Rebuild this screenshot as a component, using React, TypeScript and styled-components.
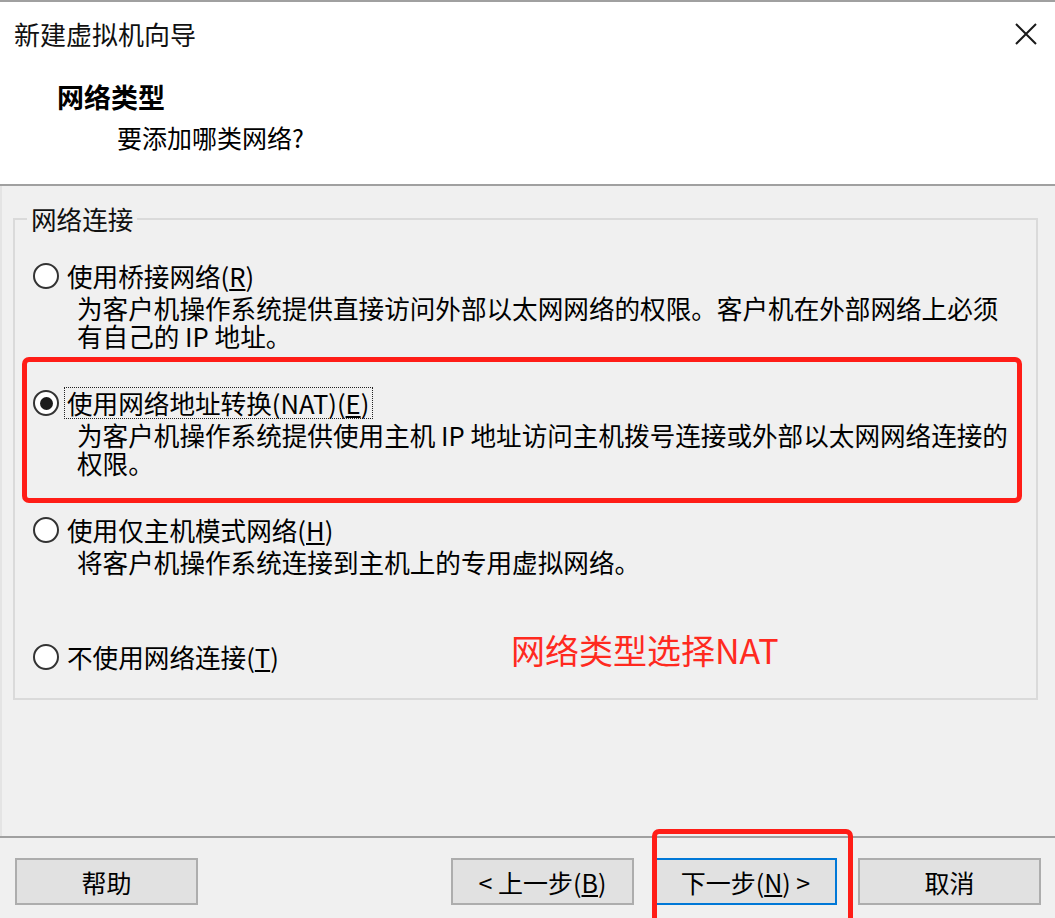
import React, { FC } from "react";
import styled, { createGlobalStyle } from "styled-components";

const FONT = `"Noto Sans CJK SC", "Liberation Sans", sans-serif`;

const GlobalStyle = createGlobalStyle`
  html, body {
    margin: 0;
    padding: 0;
    background: #f0f0f0;
  }
  body {
    font-family: ${FONT};
    color: #000;
  }
  * {
    box-sizing: border-box;
  }
`;

interface OptionProps {
  text: string;
  accel: string;
  desc?: string[];
  checked?: boolean;
  focused?: boolean;
  highlighted?: boolean;
  note?: string;
}

const NetOption: FC<OptionProps> = ({
  text,
  accel,
  desc = [],
  checked,
  focused,
  highlighted,
  note,
}) => (
  <Option $highlighted={highlighted}>
    <OptionRow>
      <Radio $checked={checked} />
      <Label $focused={focused}>
        {text}(<u>{accel}</u>)
      </Label>
    </OptionRow>
    {desc.length > 0 && (
      <Desc>
        {desc.map((line) => (
          <DescLine key={line}>{line}</DescLine>
        ))}
      </Desc>
    )}
    {note && <Annotation>{note}</Annotation>}
  </Option>
);

export default function App() {
  return (
    <>
      <GlobalStyle />
      <Dialog>
        <Header>
          <TitleBar>
            <WindowTitle>新建虚拟机向导</WindowTitle>
            <CloseButton aria-label="关闭">
              <svg width="22" height="22" viewBox="0 0 22 22">
                <path d="M1 1 L21 21 M21 1 L1 21" stroke="#1a1a1a" strokeWidth="2" />
              </svg>
            </CloseButton>
          </TitleBar>
          <Heading>
            <HeadingTitle>网络类型</HeadingTitle>
            <HeadingSub>要添加哪类网络?</HeadingSub>
          </Heading>
        </Header>

        <Body>
          <GroupBox>
            <Legend>网络连接</Legend>
            <Options>
              <NetOption
                text="使用桥接网络"
                accel="R"
                desc={[
                  "为客户机操作系统提供直接访问外部以太网网络的权限。客户机在外部网络上必须",
                  "有自己的 IP 地址。",
                ]}
              />
              <NetOption
                text="使用网络地址转换(NAT)"
                accel="E"
                checked
                focused
                highlighted
                desc={[
                  "为客户机操作系统提供使用主机 IP 地址访问主机拨号连接或外部以太网网络连接的",
                  "权限。",
                ]}
              />
              <NetOption
                text="使用仅主机模式网络"
                accel="H"
                desc={["将客户机操作系统连接到主机上的专用虚拟网络。"]}
              />
              <NetOption text="不使用网络连接" accel="T" note="网络类型选择NAT" />
            </Options>
          </GroupBox>
        </Body>

        <Footer>
          <Button>帮助</Button>
          <Spacer />
          <Button>
            &lt; 上一步(<u>B</u>)
          </Button>
          <Button $primary $gap={20}>
            下一步(<u>N</u>) &gt;
          </Button>
          <Button $gap={21}>取消</Button>
          <NextHighlight />
        </Footer>
      </Dialog>
    </>
  );
}

const Dialog = styled.div`
  width: 1055px;
  height: 918px;
  display: flex;
  flex-direction: column;
  overflow: hidden;
  border-top: 2px solid #a0a0a0;
  background: #f0f0f0;
`;

const Header = styled.header`
  height: 184px;
  flex-shrink: 0;
  background: #fff;
  border-bottom: 2px solid #a0a0a0;
`;

const TitleBar = styled.div`
  height: 64px;
  display: flex;
  align-items: center;
  justify-content: space-between;
  padding: 0 18px 0 14px;
`;

const WindowTitle = styled.h1`
  margin: 0;
  font-size: 26px;
  font-weight: 400;
  line-height: 1;
  color: #111;
`;

const CloseButton = styled.button`
  border: none;
  background: none;
  padding: 0;
  display: flex;
`;

const Heading = styled.div`
  padding: 15px 0 0 57px;
`;

const HeadingTitle = styled.h2`
  margin: 0;
  font-size: 27px;
  font-weight: 700;
  line-height: 32px;
`;

const HeadingSub = styled.p`
  margin: 8px 0 0 60px;
  font-size: 25px;
  line-height: 32px;
`;

const Body = styled.main`
  flex: 1;
  padding: 19px 17px 0 13px;
  border-left: 2px solid #e4e4e4;
`;

const GroupBox = styled.fieldset`
  margin: 0 0 0 -2px;
  padding: 25px 2px 0 0;
  height: 495px;
  min-width: 0;
  border: 2px solid #dadada;
`;

const Legend = styled.legend`
  margin-left: 12px;
  padding: 0 4px;
  font-size: 25.6px;
  line-height: 28px;
  color: #111;
`;

const Options = styled.div`
  display: flex;
  flex-direction: column;
  gap: 35px;
  padding-left: 18px;
`;

const Option = styled.div<{ $highlighted?: boolean }>`
  position: relative;

  &::before {
    content: "";
    display: ${({ $highlighted }) => ($highlighted ? "block" : "none")};
    position: absolute;
    top: -28px;
    left: -11px;
    right: 12px;
    bottom: -26px;
    border: 5px solid #ff1d17;
    border-radius: 7px;
    pointer-events: none;
  }
`;

const OptionRow = styled.div`
  height: 36px;
  display: flex;
  align-items: center;
`;

const Radio = styled.span<{ $checked?: boolean }>`
  width: 26px;
  height: 26px;
  flex-shrink: 0;
  margin-right: 5px;
  border: 2px solid #333;
  border-radius: 50%;
  background: #fff;
  display: grid;
  place-items: center;

  &::after {
    content: "";
    width: 13px;
    height: 13px;
    border-radius: 50%;
    background: ${({ $checked }) => ($checked ? "#1a1a1a" : "transparent")};
  }
`;

const Label = styled.span<{ $focused?: boolean }>`
  font-size: 25.6px;
  line-height: 30px;
  padding: 0 3px 0 2px;
  border: 1px dotted ${({ $focused }) => ($focused ? "#222" : "transparent")};
  white-space: nowrap;
`;

const Desc = styled.div`
  height: 56px;
  padding-left: 44px;
`;

const DescLine = styled.div`
  font-size: 25.6px;
  line-height: 28px;
  white-space: nowrap;
`;

const Annotation = styled.span`
  position: absolute;
  left: 478px;
  top: -9px;
  font-size: 34px;
  line-height: 40px;
  color: #ff2a1f;
  white-space: nowrap;
`;

const Footer = styled.footer`
  position: relative;
  height: 82px;
  flex-shrink: 0;
  display: flex;
  align-items: flex-start;
  padding: 20px 14px 0 15px;
  border-top: 2px solid #a0a0a0;
`;

const Spacer = styled.div`
  flex: 1;
`;

const Button = styled.button<{ $primary?: boolean; $gap?: number }>`
  width: 183px;
  height: 47px;
  margin-left: ${({ $gap }) => $gap ?? 0}px;
  background: #e1e1e1;
  border: 2px solid ${({ $primary }) => ($primary ? "#0078d7" : "#adadad")};
  font-family: ${FONT};
  font-size: 25px;
  color: #000;
  padding: 0;
`;

const NextHighlight = styled.div`
  position: absolute;
  left: 652px;
  top: -9px;
  width: 201px;
  height: 100px;
  border: 5px solid #ff1d17;
  border-radius: 7px;
  pointer-events: none;
`;
